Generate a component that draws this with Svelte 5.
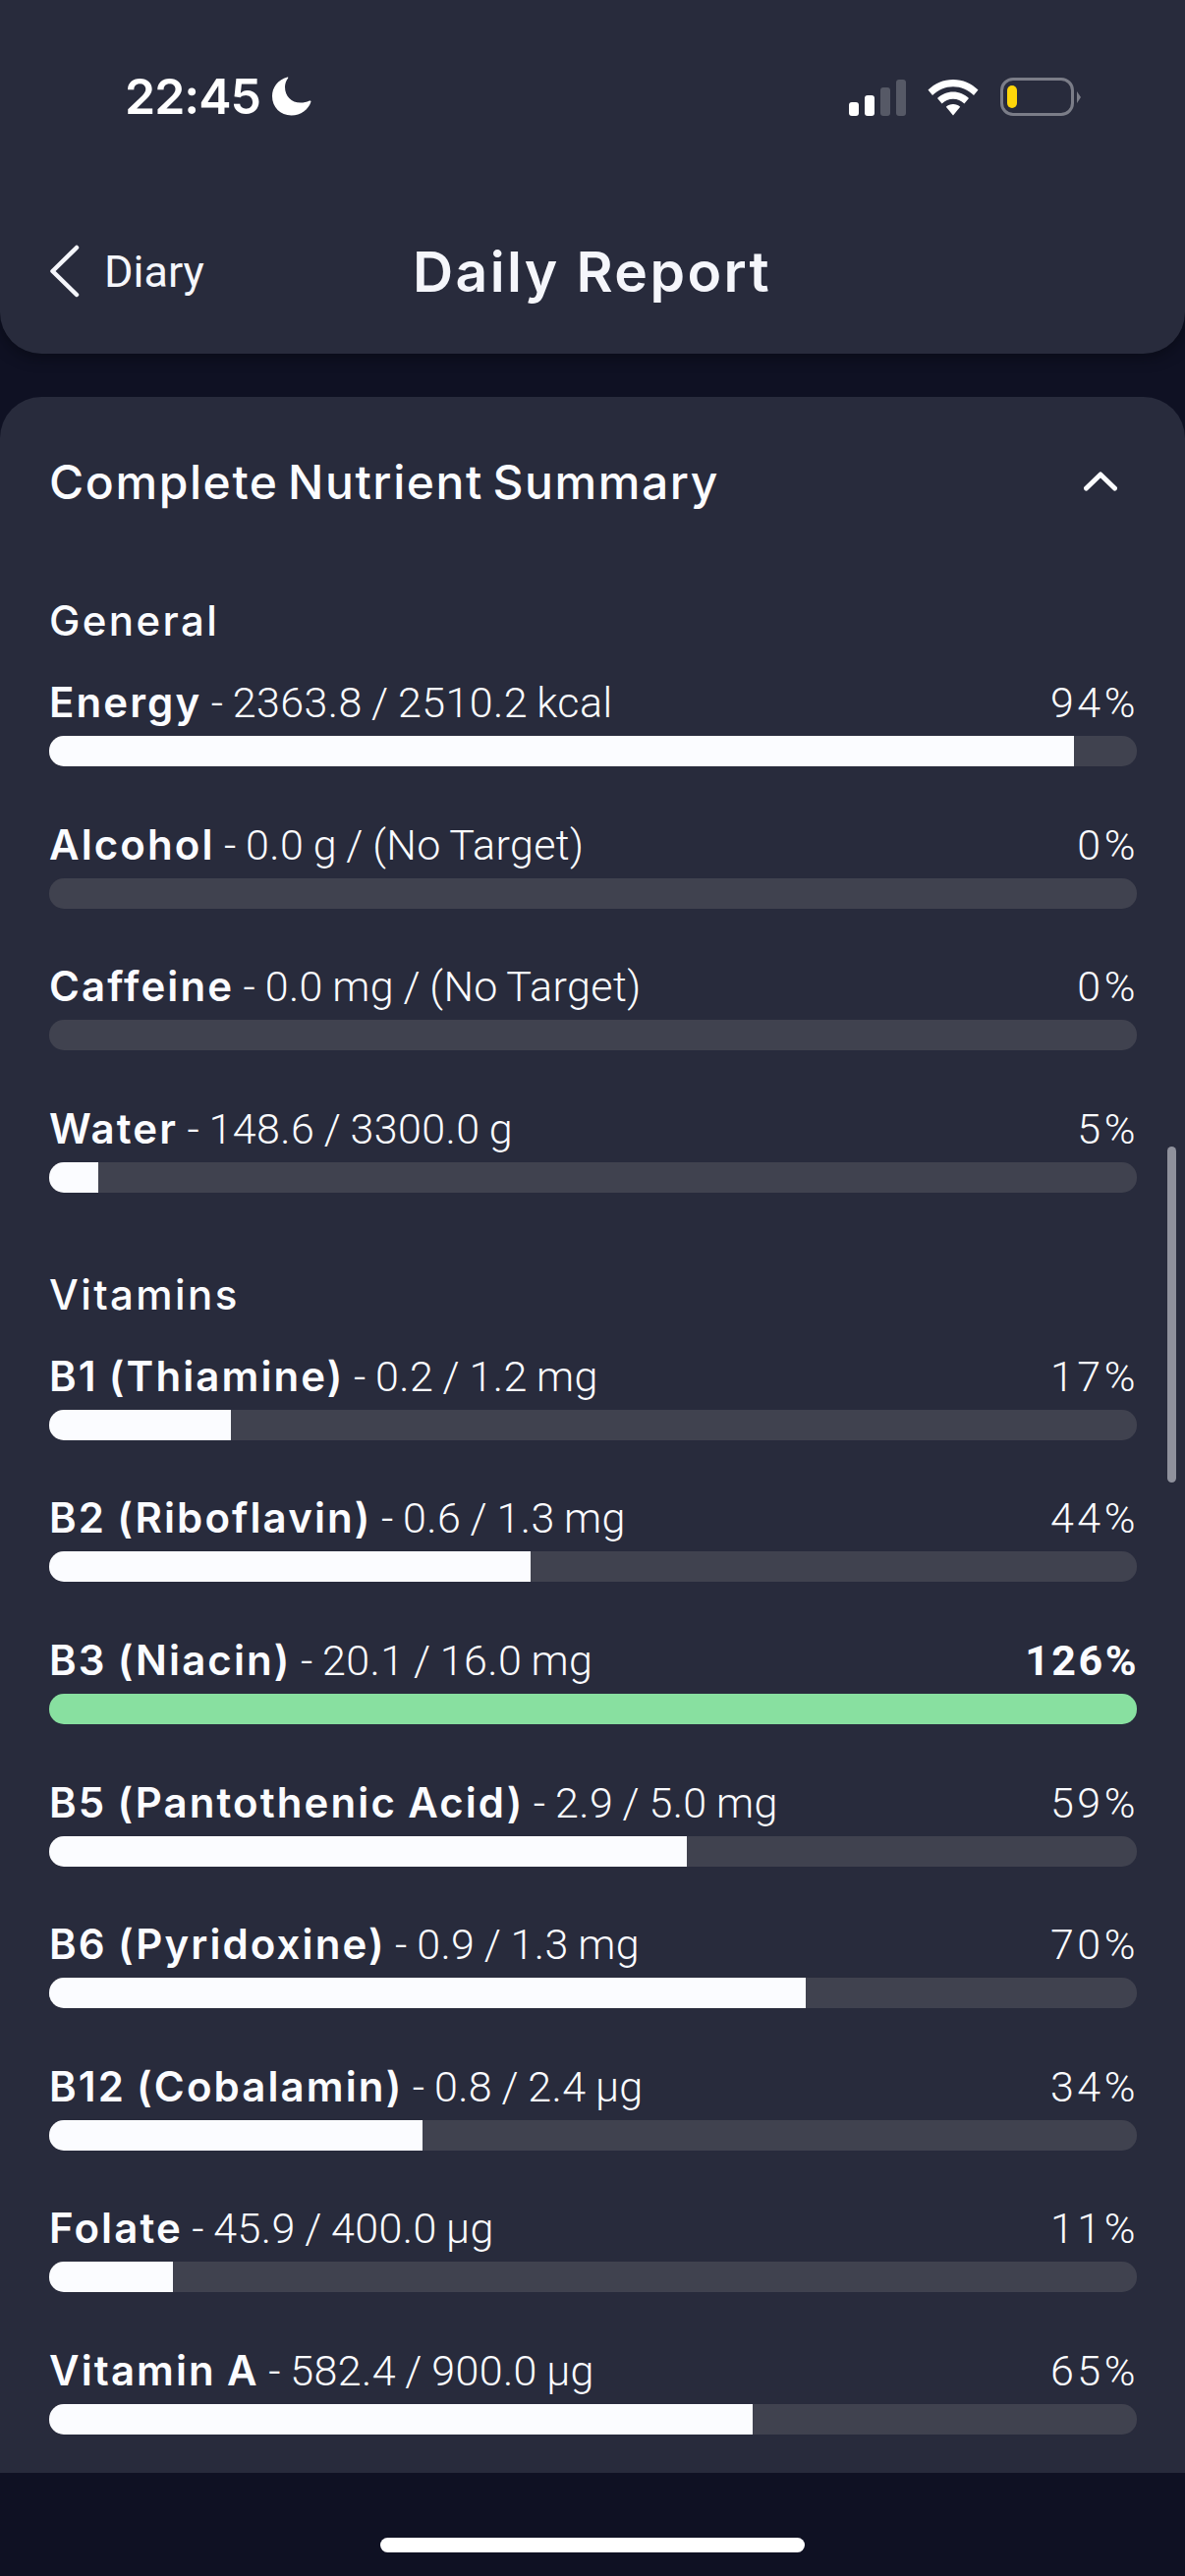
<script>
  const general = [
    { name: "Energy", value: "2363.8 / 2510.2 kcal", pct: "94%", fill: 94.2 },
    { name: "Alcohol", value: "0.0 g / (No Target)", pct: "0%", fill: 0 },
    { name: "Caffeine", value: "0.0 mg / (No Target)", pct: "0%", fill: 0 },
    { name: "Water", value: "148.6 / 3300.0 g", pct: "5%", fill: 4.5 },
  ];
  const vitamins = [
    { name: "B1 (Thiamine)", value: "0.2 / 1.2 mg", pct: "17%", fill: 16.7 },
    { name: "B2 (Riboflavin)", value: "0.6 / 1.3 mg", pct: "44%", fill: 44.3 },
    { name: "B3 (Niacin)", value: "20.1 / 16.0 mg", pct: "126%", fill: 100, over: true },
    { name: "B5 (Pantothenic Acid)", value: "2.9 / 5.0 mg", pct: "59%", fill: 58.6 },
    { name: "B6 (Pyridoxine)", value: "0.9 / 1.3 mg", pct: "70%", fill: 69.6 },
    { name: "B12 (Cobalamin)", value: "0.8 / 2.4 µg", pct: "34%", fill: 34.3 },
    { name: "Folate", value: "45.9 / 400.0 µg", pct: "11%", fill: 11.4 },
    { name: "Vitamin A", value: "582.4 / 900.0 µg", pct: "65%", fill: 64.7 },
  ];
  const sections = [
    { title: "General", rows: general },
    { title: "Vitamins", rows: vitamins },
  ];
</script>

<main class="page">
  <header class="header">
    <div class="status">
      <div class="status-left">
        <span class="clock">22:45</span>
        <svg class="moon" width="40" height="40" viewBox="0 0 40 40">
          <path
            d="M15.5 0.5 C5.5 3.5 0 11 0 20 C0 31 8.5 39.5 19.5 39.5 C29 39.5 37 33.5 39.5 25.5 C39.5 24.5 38.8 24.2 38 24.6 C35 26 32 26.6 29 26.6 C19.5 26.6 13 20 13 10.5 C13 7.5 14 4.5 16 1.8 C16.6 0.9 16.3 0.3 15.5 0.5 Z"
            fill="#ffffff"
          />
        </svg>
      </div>
      <div class="status-right">
        <div class="signal">
          <span class="sig s1"></span>
          <span class="sig s2"></span>
          <span class="sig s3"></span>
          <span class="sig s4"></span>
        </div>
        <svg class="wifi" width="52" height="38" viewBox="0 0 52 38">
          <path d="M26 1 C16 1 7.5 5 0.5 11.5 L5 17 C11 11.5 18 8.2 26 8.2 C34 8.2 41 11.5 47 17 L51.5 11.5 C44.5 5 36 1 26 1 Z" fill="#ffffff" />
          <path d="M26 13.5 C19.8 13.5 14.4 16 10 20 L14.6 25.5 C17.8 22.6 21.6 20.8 26 20.8 C30.4 20.8 34.2 22.6 37.4 25.5 L42 20 C37.6 16 32.2 13.5 26 13.5 Z" fill="#ffffff" />
          <path d="M26 26 C23.2 26 20.8 27 18.8 28.8 L26 37.5 L33.2 28.8 C31.2 27 28.8 26 26 26 Z" fill="#ffffff" />
        </svg>
        <div class="battery">
          <div class="battery-body"><span class="battery-level"></span></div>
          <span class="battery-nub"></span>
        </div>
      </div>
    </div>
    <nav class="nav">
      <div class="back">
        <svg width="32" height="54" viewBox="0 0 32 54">
          <path d="M28 3 L3.5 27 L28 51" fill="none" stroke="#f5f6fb" stroke-width="4.5" stroke-linecap="round" stroke-linejoin="round" />
        </svg>
        <span class="back-label">Diary</span>
      </div>
      <h1 class="nav-title">Daily Report</h1>
    </nav>
  </header>

  <section class="card">
    <div class="card-head">
      <h2 class="card-title">Complete Nutrient Summary</h2>
      <svg width="34" height="20" viewBox="0 0 34 20">
        <path d="M2.5 17 L17 3 L31.5 17" fill="none" stroke="#fbfcff" stroke-width="5" stroke-linecap="round" stroke-linejoin="round" />
      </svg>
    </div>

    {#each sections as section}
      <div class="group">
        <h3 class="group-title">{section.title}</h3>
        {#each section.rows as row}
          <div class="row">
            <div class="row-text">
              <span class="row-label"><b>{row.name}</b> - {row.value}</span>
              <span class="row-pct" class:row-pct-over={row.over}>{row.pct}</span>
            </div>
            <div class="track">
              <div class="fill" class:fill-over={row.over} style="width: {row.fill}%"></div>
            </div>
          </div>
        {/each}
      </div>
    {/each}
    <div class="scrollbar"></div>
  </section>

  <div class="home-area"><span class="home-bar"></span></div>
</main>

<style>
  :global(body) {
    margin: 0;
    background: #0f1123;
  }
  h1,
  h2,
  h3 {
    margin: 0;
  }
  .page {
    width: 1206px;
    height: 2622px;
    display: flex;
    flex-direction: column;
    background: #0f1123;
    color: #fbfcff;
    font-family: "Roboto", sans-serif;
    overflow: hidden;
  }
  .header {
    height: 360px;
    flex: none;
    box-sizing: border-box;
    background: #282b3c;
    border-radius: 0 0 42px 42px;
    box-shadow: 0 4px 14px rgba(6, 8, 16, 0.6);
  }
  .status {
    height: 200px;
    box-sizing: border-box;
    padding: 74px 106px 0 127px;
    display: flex;
    justify-content: space-between;
    align-items: flex-start;
  }
  .status-left {
    display: flex;
    align-items: center;
    gap: 12px;
    height: 48px;
  }
  .clock {
    font-family: "Inter", sans-serif;
    font-size: 50px;
    font-weight: 600;
    color: #ffffff;
    line-height: 48px;
    letter-spacing: -1px;
  }
  .status-right {
    display: flex;
    align-items: flex-end;
    gap: 22px;
    height: 44px;
  }
  .signal {
    display: flex;
    align-items: flex-end;
    gap: 6px;
    height: 37px;
  }
  .sig {
    width: 10px;
    border-radius: 3px;
    background: #ffffff;
  }
  .s1 { height: 14px; }
  .s2 { height: 21px; }
  .s3 { height: 29px; background: #565966; }
  .s4 { height: 37px; background: #565966; }
  .battery {
    display: flex;
    align-items: center;
    gap: 3px;
  }
  .battery-body {
    width: 75px;
    height: 39px;
    box-sizing: border-box;
    border: 3px solid #7b7d88;
    border-radius: 13px;
    padding: 5px 4px;
  }
  .battery-level {
    display: block;
    width: 10px;
    height: 100%;
    border-radius: 5px;
    background: #ffd60a;
  }
  .battery-nub {
    width: 0;
    height: 0;
    border-top: 6px solid transparent;
    border-bottom: 6px solid transparent;
    border-left: 4px solid #7b7d88;
  }
  .nav {
    display: flex;
    align-items: center;
    height: 70px;
    margin-top: 41px;
    padding-left: 50px;
  }
  .back {
    display: flex;
    align-items: center;
    gap: 24px;
    width: 370px;
  }
  .back-label {
    font-size: 45px;
    color: #f5f6fb;
  }
  .nav-title {
    font-family: "Inter", sans-serif;
    font-size: 57px;
    font-weight: 600;
    letter-spacing: 2.4px;
    color: #f5f6fb;
  }
  .card {
    position: relative;
    flex: none;
    height: 2113px;
    margin-top: 44px;
    box-sizing: border-box;
    padding: 48px 49px 0 50px;
    background: #282b3c;
    border-radius: 42px 42px 0 0;
  }
  .card-head {
    display: flex;
    justify-content: space-between;
    align-items: center;
    height: 76px;
    padding-right: 20px;
  }
  .card-title {
    font-family: "Inter", sans-serif;
    font-size: 48px;
    font-weight: 500;
    letter-spacing: 1.6px;
    word-spacing: -5px;
  }
  .group {
    margin-top: 74px;
  }
  .group + .group {
    margin-top: 74px;
  }
  .group-title {
    font-family: "Inter", sans-serif;
    font-size: 42px;
    font-weight: 500;
    line-height: 60px;
    letter-spacing: 2.4px;
    margin-bottom: 27px;
  }
  .row + .row {
    margin-top: 53.6px;
  }
  .row-text {
    display: flex;
    justify-content: space-between;
    height: 60px;
    line-height: 52px;
    font-size: 43px;
    font-weight: 300;
    letter-spacing: 0.4px;
    word-spacing: -1.5px;
  }
  .row-label b {
    font-family: "Inter", sans-serif;
    font-weight: 600;
    font-size: 42px;
    letter-spacing: 2.1px;
  }
  .row-pct {
    letter-spacing: 3.5px;
    margin-right: -2px;
  }
  .row-pct-over {
    font-weight: 700;
    letter-spacing: 2.5px;
  }
  .track {
    height: 31px;
    border-radius: 15px;
    background: #40424f;
    overflow: hidden;
  }
  .fill {
    height: 100%;
    background: #fbfcff;
  }
  .fill-over {
    background: #88e0a0;
  }
  .scrollbar {
    position: absolute;
    left: 1188px;
    top: 763px;
    width: 9px;
    height: 342px;
    border-radius: 5px;
    background: #8f919c;
  }
  .home-area {
    flex: 1;
    display: flex;
    justify-content: center;
    padding-top: 66px;
  }
  .home-bar {
    width: 432px;
    height: 15px;
    border-radius: 8px;
    background: #ffffff;
  }
</style>
